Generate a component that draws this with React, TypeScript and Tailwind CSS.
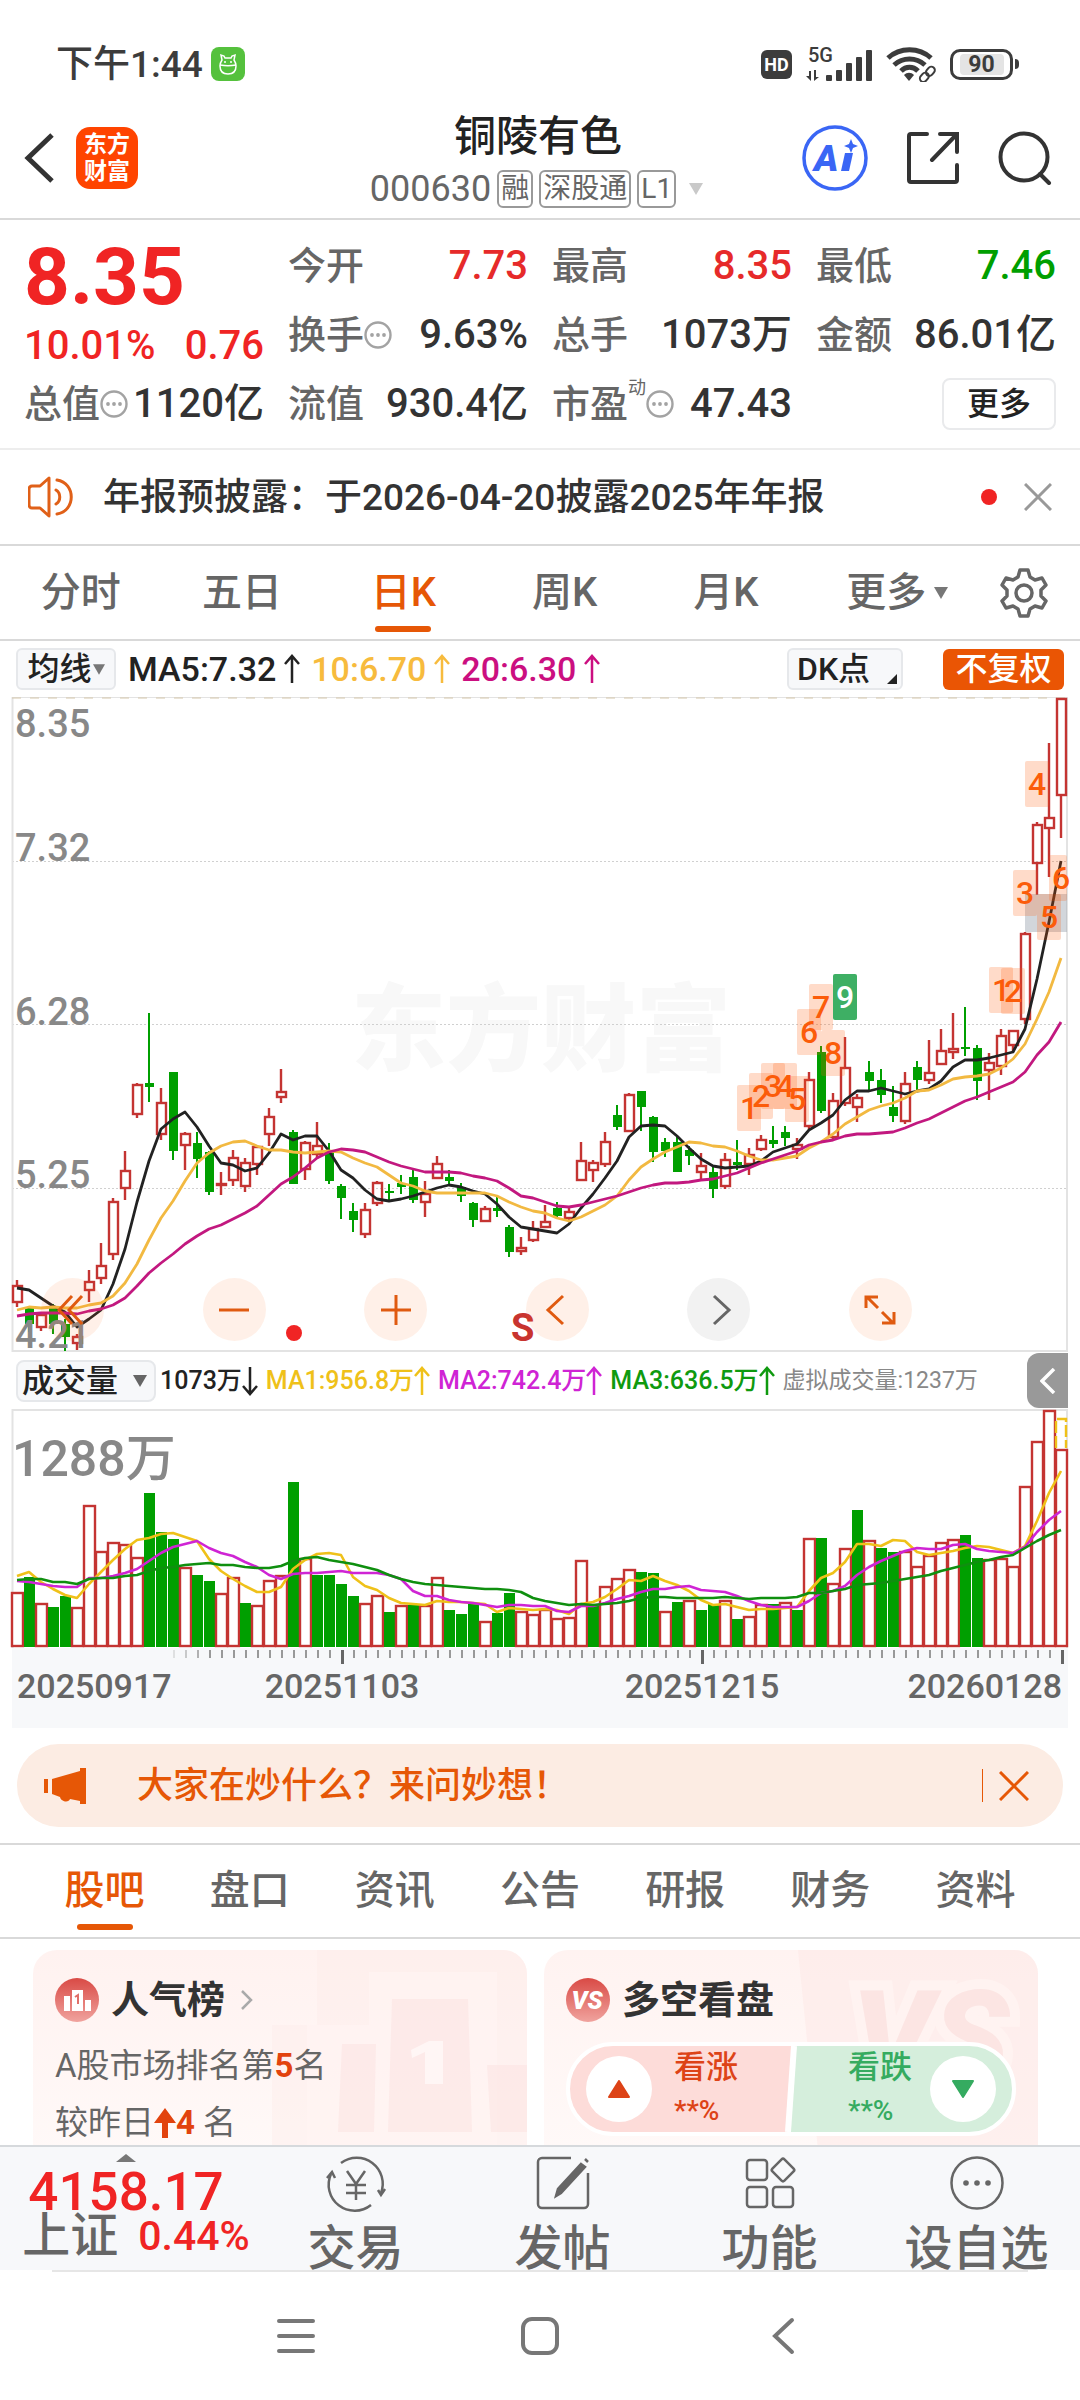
import { useState } from 'react'
import type { ReactNode } from 'react'

type Candle = ['u' | 'd', number, number, number, number]

const UP = '#c43432'
const DOWN = '#009f00'

// direction, high, body top, body bottom, low (chart units)
const candles: Candle[] = [
  ['u', 583, 588, 605, 610], ['d', 610, 611, 627, 635], ['u', 615, 617, 630, 634], ['d', 607, 611, 627, 637],
  ['d', 622, 627, 640, 654], ['u', 637, 639, 646, 653], ['u', 573, 584, 593, 605], ['u', 546, 568, 581, 587],
  ['u', 501, 504, 557, 563], ['u', 454, 473, 491, 503], ['u', 386, 387, 417, 421], ['d', 316, 386, 390, 405],
  ['u', 391, 405, 437, 443], ['d', 375, 375, 454, 463], ['u', 435, 436, 448, 473], ['d', 435, 446, 462, 481],
  ['d', 454, 455, 495, 498], ['u', 475, 486, 487, 498], ['u', 453, 460, 483, 489], ['u', 461, 465, 489, 495],
  ['u', 449, 449, 467, 478], ['u', 411, 419, 437, 449], ['u', 372, 394, 400, 406], ['d', 433, 435, 487, 487],
  ['u', 444, 445, 472, 483], ['u', 425, 448, 457, 462], ['d', 446, 454, 484, 487], ['d', 487, 489, 501, 522],
  ['d', 506, 514, 523, 535], ['u', 506, 512, 537, 541], ['u', 484, 485, 506, 509], ['d', 487, 494, 496, 503],
  ['d', 478, 486, 490, 497], ['d', 473, 480, 503, 506], ['u', 484, 496, 505, 520], ['u', 459, 466, 481, 482],
  ['d', 473, 480, 484, 489], ['d', 486, 490, 499, 505], ['d', 505, 506, 523, 530], ['u', 509, 511, 524, 525],
  ['d', 500, 511, 514, 520], ['d', 528, 530, 555, 560], ['u', 540, 550, 554, 558], ['u', 524, 531, 543, 545],
  ['u', 508, 524, 530, 531], ['d', 505, 511, 519, 522], ['u', 510, 514, 521, 524], ['u', 445, 463, 483, 484],
  ['u', 463, 465, 473, 485], ['u', 435, 444, 467, 470], ['d', 408, 418, 430, 433], ['u', 396, 397, 434, 435],
  ['d', 394, 394, 410, 434], ['d', 419, 420, 455, 465], ['d', 441, 445, 454, 460], ['d', 439, 445, 475, 475],
  ['d', 449, 453, 459, 468], ['u', 456, 468, 475, 483], ['d', 469, 475, 492, 501], ['u', 456, 462, 489, 492],
  ['d', 443, 465, 468, 473], ['u', 451, 457, 467, 478], ['u', 438, 442, 452, 454], ['d', 429, 443, 447, 451],
  ['d', 429, 435, 441, 449], ['u', 441, 447, 452, 462], ['u', 375, 382, 429, 432], ['d', 349, 355, 414, 416],
  ['u', 396, 403, 440, 442], ['u', 340, 370, 406, 409], ['u', 397, 400, 410, 425], ['d', 364, 375, 384, 394],
  ['d', 372, 383, 398, 406], ['d', 389, 410, 419, 425], ['u', 375, 386, 424, 427], ['d', 364, 370, 383, 395],
  ['u', 343, 375, 383, 387], ['u', 332, 353, 367, 368], ['u', 316, 351, 355, 362], ['d', 310, 350, 352, 359],
  ['d', 348, 351, 384, 403], ['u', 356, 365, 373, 403], ['u', 332, 338, 369, 378], ['u', 333, 333, 348, 355],
  ['u', 235, 236, 322, 327], ['u', 125, 127, 166, 198], ['u', 46, 120, 131, 180], ['u', 1, 1, 98, 141],
]

const ma5 = [
  591, 593, 601, 609, 615, 630, 622, 613, 587, 552, 505, 464, 432, 422, 415, 430, 449, 466, 468, 474, 471, 456,
  437, 443, 439, 439, 454, 473, 481, 493, 502, 504, 502, 499, 495, 491, 488, 490, 494, 497, 507, 520, 530, 532,
  534, 536, 527, 511, 497, 481, 464, 440, 429, 428, 429, 439, 451, 462, 469, 471, 470, 469, 464, 455, 451, 447,
  433, 426, 418, 403, 394, 394, 391, 394, 397, 394, 392, 384, 370, 363, 363, 361, 358, 355, 332, 282, 225, 164,
]

const ma10 = [
  613, 610, 611, 610, 611, 611, 608, 606, 599, 586, 567, 543, 521, 504, 484, 466, 456, 449, 445, 444, 449, 453,
  453, 455, 456, 455, 454, 455, 461, 466, 470, 478, 486, 489, 494, 496, 496, 496, 496, 496, 499, 505, 510, 514,
  516, 521, 524, 520, 514, 508, 499, 483, 470, 462, 455, 450, 445, 446, 449, 450, 454, 459, 463, 463, 461, 459,
  451, 445, 437, 427, 420, 413, 409, 406, 401, 394, 393, 388, 382, 380, 379, 377, 371, 362, 347, 322, 295, 261,
]

const ma20 = [
  619, 617, 616, 616, 616, 617, 614, 612, 608, 601, 589, 576, 566, 557, 547, 539, 532, 528, 522, 516, 509, 498,
  487, 480, 471, 461, 455, 452, 453, 455, 460, 465, 469, 472, 475, 475, 475, 476, 479, 481, 484, 491, 499, 501,
  505, 509, 510, 508, 505, 502, 499, 495, 491, 488, 486, 486, 485, 483, 482, 479, 476, 471, 466, 462, 458, 454,
  448, 445, 443, 439, 437, 437, 436, 435, 431, 426, 422, 416, 410, 404, 400, 395, 390, 385, 375, 358, 345, 325,
]

const volumes = [
  183, 168, 194, 198, 187, 198, 96, 142, 133, 135, 148, 84, 123, 130, 158, 166, 172, 184, 168, 194, 196, 171,
  166, 73, 149, 166, 166, 175, 187, 194, 186, 203, 196, 196, 196, 168, 201, 205, 195, 212, 204, 184, 202, 205,
  200, 209, 208, 151, 195, 177, 169, 160, 163, 164, 202, 193, 191, 201, 195, 191, 210, 207, 195, 195, 193, 201,
  129, 129, 174, 139, 101, 131, 139, 143, 142, 157, 146, 133, 130, 126, 149, 150, 149, 157, 77, 32, 1, 40,
]

// bars drawn in the falling colour
const volumeDown = new Set([1, 3, 4, 11, 12, 13, 15, 16, 19, 23, 25, 26, 27, 28, 31, 33, 36, 37, 38, 40, 41, 48, 52, 53, 55, 57, 58, 60, 63, 65, 67, 70, 72, 73, 79, 80])

const vma1 = [
  167, 163, 173, 180, 186, 189, 175, 163, 151, 140, 131, 129, 125, 124, 128, 132, 150, 162, 170, 177, 183, 183,
  178, 160, 151, 145, 144, 146, 168, 177, 181, 189, 194, 195, 196, 192, 193, 193, 194, 195, 203, 199, 200, 201,
  200, 201, 205, 195, 193, 188, 180, 171, 172, 167, 172, 176, 182, 191, 196, 195, 198, 201, 200, 200, 199, 198,
  182, 169, 164, 153, 135, 135, 137, 131, 132, 143, 146, 144, 142, 139, 137, 138, 141, 144, 137, 112, 84, 62,
]

const vma2 = [
  172, 173, 175, 177, 178, 178, 169, 169, 167, 164, 160, 152, 144, 138, 135, 132, 139, 144, 147, 153, 158, 166,
  170, 165, 164, 164, 163, 162, 164, 164, 164, 166, 170, 182, 187, 187, 191, 193, 194, 196, 198, 196, 196, 197,
  197, 202, 203, 197, 197, 194, 190, 187, 183, 180, 180, 178, 177, 181, 182, 183, 187, 192, 196, 198, 198, 198,
  192, 184, 182, 177, 166, 158, 152, 147, 142, 139, 140, 140, 136, 135, 140, 142, 143, 144, 138, 123, 111, 102,
]

const vma3 = [
  171, 170, 170, 173, 173, 175, 170, 169, 169, 167, 166, 162, 159, 158, 156, 155, 154, 156, 156, 158, 159, 159,
  157, 152, 149, 148, 151, 153, 155, 158, 161, 166, 170, 173, 175, 176, 177, 178, 179, 180, 180, 181, 183, 189,
  192, 194, 196, 195, 196, 195, 194, 192, 189, 188, 188, 189, 189, 189, 189, 188, 189, 190, 189, 189, 189, 188,
  184, 184, 182, 180, 176, 175, 174, 172, 170, 168, 166, 162, 159, 156, 153, 151, 148, 146, 139, 132, 126, 121,
]

// candle index, top, digit
const marks: [number, number, string][] = [
  [61, 388, '1'], [62, 376, '2'], [63, 366, '3'], [64, 366, '4'], [65, 379, '5'], [66, 312, '6'], [67, 287, '7'],
  [68, 333, '8'], [69, 277, '9'], [82, 270, '1'], [83, 271, '2'], [84, 173, '3'], [85, 64, '4'], [86, 197, '5'],
  [87, 158, '6'],
]

const cx = (i: number) => 17 + i * 12
const line = (values: number[]) => values.map((v, i) => `${cx(i)},${v}`).join(' ')

function Arrow({ down = false }: { down?: boolean }) {
  return (
    <svg viewBox="0 0 16 30" className="h-[30px] w-4 shrink-0" fill="none" stroke="currentColor" strokeWidth="2.5">
      {down ? <path d="M8 1v27M1 20l7 8 7-8" /> : <path d="M8 29V2M1 10l7-8 7 8" />}
    </svg>
  )
}

function Caret({ className }: { className: string }) {
  return (
    <svg viewBox="0 0 14 12" className={className} fill="currentColor">
      <path d="M0 0h14L7 12z" />
    </svg>
  )
}

function InfoDots() {
  return (
    <svg viewBox="0 0 28 28" className="h-7 w-7 shrink-0" fill="none" stroke="#a3a3a3" strokeWidth="2.4">
      <circle cx="14" cy="14" r="12.5" />
      <g fill="#a3a3a3" stroke="none">
        <circle cx="8" cy="14" r="1.9" />
        <circle cx="14" cy="14" r="1.9" />
        <circle cx="20" cy="14" r="1.9" />
      </g>
    </svg>
  )
}

function StatusBar() {
  return (
    <div className="flex h-[104px] items-center justify-between pr-[61px] pl-[56px] pt-6 text-[#3c3c3c]">
      <div className="flex items-center gap-2">
        <span className="text-[37px] leading-none font-medium">下午1:44</span>
        <svg viewBox="0 0 34 34" className="h-[34px] w-[34px]">
          <rect width="34" height="34" rx="8" fill="#55c13d" />
          <g fill="none" stroke="#fff" strokeWidth="1.5">
            <path d="M11 13l-1-5 3 1 1 2h6l1-2 3-1-1 5c2 3 2 5 2 6 0 5-3 8-8 8s-8-3-8-8c0-1 0-3 2-6z" />
            <path d="M9 18c5 1 11 1 16 0" />
          </g>
          <circle cx="14" cy="15" r="1" fill="#fff" />
          <circle cx="20" cy="15" r="1" fill="#fff" />
        </svg>
      </div>
      <div className="flex items-center gap-[14px]">
        <span className="flex h-[29px] w-[31px] items-center justify-center rounded-md bg-[#3c3c3c] text-[18px] font-bold text-white">HD</span>
        <svg viewBox="0 0 66 36" className="h-9 w-[66px]" fill="#3c3c3c">
          <text x="2" y="16" fontSize="20" fontWeight="500">5G</text>
          <path d="M3 25h2v10l-5-5h3zM8 34V24h2v7h3l-5 4z" />
          <rect x="20" y="29" width="6" height="6" rx="1" />
          <rect x="30" y="24" width="6" height="11" rx="1" />
          <rect x="40" y="17" width="6" height="18" rx="1" />
          <rect x="50" y="11" width="6" height="24" rx="1" />
          <rect x="60" y="4" width="6" height="31" rx="1" />
        </svg>
        <svg viewBox="0 0 50 36" className="h-9 w-[50px]" fill="none" stroke="#3c3c3c" strokeWidth="5">
          <path d="M2 12c12-11 31-11 43 0M8 19c9-8 22-8 31 0M15 25c5-5 12-5 17 0" />
          <path d="M18 29c3-3 7-3 10 0l-5 6z" fill="#3c3c3c" stroke="none" />
          <g stroke="#fff" strokeWidth="6">
            <path d="M36 31l10-10" />
          </g>
          <g strokeWidth="2">
            <rect x="35" y="26" width="7" height="10" rx="3.5" transform="rotate(40 38 31)" />
            <rect x="41" y="20" width="7" height="10" rx="3.5" transform="rotate(40 44 25)" />
          </g>
        </svg>
        <div className="flex items-center gap-[2px]">
          <span className="flex h-[31px] w-[63px] items-center justify-center rounded-[10px] border-[3px] border-[#3c3c3c] p-[2px]">
            <span className="flex h-full w-[44px] items-center justify-center rounded bg-[#e4e4e4] text-[23px] leading-none font-bold">90</span>
          </span>
          <span className="h-[10px] w-[4px] rounded-r bg-[#3c3c3c]" />
        </div>
      </div>
    </div>
  )
}

function Tag({ children }: { children: ReactNode }) {
  return <span className="rounded-md border-2 border-[#999] px-[2px] text-[28px] leading-[34px]">{children}</span>
}

function Header() {
  return (
    <header className="grid h-[116px] grid-cols-[1fr_auto_1fr] items-center border-b-2 border-[#d9d9d9] pr-7 pl-6">
      <div className="mb-[6px] flex items-center gap-[22px]">
        <button aria-label="返回">
          <svg viewBox="0 0 30 50" className="h-[50px] w-[30px]" fill="none" stroke="#333" strokeWidth="5">
            <path d="M28 2L4 25l24 23" />
          </svg>
        </button>
        <a href="#home" className="flex h-[62px] w-[62px] flex-col items-center justify-center rounded-[14px] bg-[#ff4400] text-[23px] leading-[27px] font-bold text-white">
          <span>东方</span>
          <span>财富</span>
        </a>
      </div>
      <div className="flex flex-col items-center gap-[10px]">
        <h1 className="text-[42px] leading-[46px] font-medium text-[#222]">铜陵有色</h1>
        <div className="flex items-center gap-[6px] text-[#666]">
          <span className="text-[36px] leading-[38px]">000630</span>
          <Tag>融</Tag>
          <Tag>深股通</Tag>
          <Tag>L1</Tag>
          <Caret className="ml-1 h-3 w-5 text-[#c9c9c9]" />
        </div>
      </div>
      <div className="mb-[6px] flex items-center justify-end gap-[39px]">
        <button aria-label="AI">
          <svg viewBox="0 0 66 66" className="h-[66px] w-[66px]">
            <circle cx="33" cy="33" r="31" fill="none" stroke="#3a66f5" strokeWidth="3.5" />
            <text x="12" y="46" fontSize="37" fontWeight="900" fontStyle="italic" fill="#3a66f5">A</text>
            <path d="M43 28h8l-4 18h-8z" fill="#3a66f5" />
            <path d="M49 14l2 5 5 2-5 2-2 5-2-5-5-2 5-2z" fill="#3a66f5" />
          </svg>
        </button>
        <button aria-label="分享">
          <svg viewBox="0 0 52 54" className="h-[54px] w-[52px]" fill="none" stroke="#333" strokeWidth="4" strokeLinecap="round">
            <path d="M20 3H4a2 2 0 0 0-2 2v44a2 2 0 0 0 2 2h44a2 2 0 0 0 2-2V34" />
            <path d="M33 3h17v18M50 3L25 29" />
          </svg>
        </button>
        <button aria-label="搜索">
          <svg viewBox="0 0 54 54" className="h-[54px] w-[54px]" fill="none" stroke="#333" strokeWidth="4" strokeLinecap="round">
            <circle cx="26" cy="26" r="23.5" />
            <path d="M42 43l9 9" />
          </svg>
        </button>
      </div>
    </header>
  )
}

function Stat({ label, value, color = 'text-[#333]', info = false, sup }: { label: string; value: string; color?: string; info?: boolean; sup?: string }) {
  return (
    <div className="flex items-center justify-between whitespace-nowrap">
      <span className="flex items-center text-[38px] leading-[48px] font-medium text-[#666]">
        {label}
        {sup && <sup className="-top-4 text-[18px] leading-none font-normal">{sup}</sup>}
        {info && <InfoDots />}
      </span>
      <span className={`text-[40px] leading-[48px] font-medium ${color}`}>{value}</span>
    </div>
  )
}

function Quote() {
  return (
    <section className="border-b-2 border-[#ededed] px-6 pt-[11px] pb-[10px]">
      <div className="grid auto-rows-[69px] grid-cols-4 gap-x-6">
        <div className="row-span-2 pt-2 text-[#f02424]">
          <p className="text-[80px] leading-[76px] font-bold">8.35</p>
          <p className="flex justify-between text-[40px] leading-[62px] font-medium">
            <span>10.01%</span>
            <span>0.76</span>
          </p>
        </div>
        <Stat label="今开" value="7.73" color="text-[#e62a2a]" />
        <Stat label="最高" value="8.35" color="text-[#e62a2a]" />
        <Stat label="最低" value="7.46" color="text-[#009f00]" />
        <Stat label="换手" value="9.63%" info />
        <Stat label="总手" value="1073万" />
        <Stat label="金额" value="86.01亿" />
        <Stat label="总值" value="1120亿" info />
        <Stat label="流值" value="930.4亿" />
        <Stat label="市盈" value="47.43" sup="动" info />
        <div className="flex items-center justify-end">
          <button className="h-[52px] w-[114px] rounded-lg border-2 border-[#e9eaec] text-[32px] leading-none font-medium text-[#222]">更多</button>
        </div>
      </div>
    </section>
  )
}

function Notice() {
  return (
    <div className="flex h-24 items-center border-b-2 border-[#d9d9d9] px-7">
      <svg viewBox="0 0 46 42" className="h-[42px] w-[46px]" fill="none" stroke="#e06018" strokeWidth="3" strokeLinecap="round" strokeLinejoin="round">
        <path d="M21 2v38l-9-8H4a3 3 0 0 1-3-3V13a3 3 0 0 1 3-3h8z" />
        <path d="M28 14c5 3 5 11 0 14M29 4c19 3 19 31 0 34" />
      </svg>
      <p className="ml-[29px] flex-1 text-[37px] leading-none font-medium text-[#333]">年报预披露：于2026-04-20披露2025年年报</p>
      <span className="mr-[27px] h-4 w-4 rounded-full bg-[#f02424]" />
      <button aria-label="关闭">
        <svg viewBox="0 0 28 28" className="h-7 w-7" fill="none" stroke="#999" strokeWidth="3">
          <path d="M1 1l26 26M27 1L1 27" />
        </svg>
      </button>
    </div>
  )
}

function Tab({ label, active, onClick, caret = false }: { label: string; active: boolean; onClick: () => void; caret?: boolean }) {
  return (
    <button
      onClick={onClick}
      className={`relative flex h-full flex-1 items-center justify-center text-[40px] font-medium ${active ? 'text-[#e65706]' : 'text-[#666]'}`}
    >
      {caret ? <span className="pl-5">{label}</span> : label}
      {caret && <Caret className="ml-2 h-3 w-[14px] text-[#777]" />}
      {active && <span className="absolute bottom-[7px] left-1/2 h-[6px] w-14 -translate-x-1/2 rounded-full bg-[#e65706]" />}
    </button>
  )
}

function PeriodTabs() {
  const [active, setActive] = useState('日K')
  return (
    <nav className="flex h-[95px] items-center border-b-2 border-[#d9d9d9]">
      {['分时', '五日', '日K', '周K', '月K', '更多'].map((t) => (
        <Tab key={t} label={t} active={t === active} onClick={() => setActive(t)} caret={t === '更多'} />
      ))}
      <button aria-label="设置" className="flex w-28 justify-center">
        <svg viewBox="0 0 48 50" className="h-[50px] w-12" fill="none" stroke="#666" strokeWidth="3.5" strokeLinejoin="round">
          <path d="M20 2h8l2 7 5 3 7-2 4 7-5 5v6l5 5-4 7-7-2-5 3-2 7h-8l-2-7-5-3-7 2-4-7 5-5v-6l-5-5 4-7 7 2 5-3z" />
          <circle cx="24" cy="25" r="8" />
        </svg>
      </button>
    </nav>
  )
}

function MaRow() {
  return (
    <div className="flex h-14 items-center px-4 text-[34px] leading-none font-medium whitespace-nowrap">
      <button className="flex h-[42px] w-[100px] items-center justify-center gap-px rounded-md border-2 border-[#e6e8eb] bg-[#f7f8fa] text-[32px] font-medium text-[#222]">
        均线
        <Caret className="h-[11px] w-3 text-[#777]" />
      </button>
      <span className="ml-3 flex items-center gap-2 text-[#222]">MA5:7.32<Arrow /></span>
      <span className="ml-[11px] flex items-center gap-2 text-[#f7bb3d]">10:6.70<Arrow /></span>
      <span className="ml-[11px] flex items-center gap-2 text-[#cb0f80]">20:6.30<Arrow /></span>
      <button className="ml-auto flex h-[42px] w-[116px] items-center justify-between rounded-md border-2 border-[#e6e8eb] bg-[#f7f8fa] pr-1 pl-2 text-[32px] font-medium text-[#222]">
        DK点
        <svg viewBox="0 0 10 10" className="mt-5 h-[10px] w-[10px]"><path d="M10 0v10H0z" fill="#222" /></svg>
      </button>
      <button className="ml-10 h-[41px] w-[121px] rounded-md bg-[#ea5504] text-[32px] font-medium text-white">不复权</button>
    </div>
  )
}

function RoundButton({ label, muted = false, children }: { label: string; muted?: boolean; children: ReactNode }) {
  return (
    <button
      aria-label={label}
      className={`flex h-[63px] w-[63px] items-center justify-center rounded-full ${muted ? 'bg-[#f2f2f2] text-[#666]' : 'bg-[#ff6a1a]/10 text-[#e05a10]'}`}
    >
      <svg viewBox="0 0 32 32" className="h-8 w-8" fill="none" stroke="currentColor" strokeWidth="3">{children}</svg>
    </button>
  )
}

function PriceChart() {
  return (
    <div className="relative">
      <svg viewBox="0 0 1080 655" className="block w-full">
        <text x="351" y="367" fontSize="95" fontWeight="900" fill="#f8f8f8">东方财富</text>
        <g stroke="#d0d0d0" strokeDasharray="2 2">
          <path d="M12 164.5H1067M12 327.5H1067M12 491.5H1067" />
        </g>
        <g fill="none" stroke="#e3e3e3" strokeWidth="2">
          <path d="M12.5 0V654H1067V0z" />
        </g>
        <path d="M12 1H1067" stroke="#d5c7ab" strokeDasharray="9 9" />

        {candles.map(([dir, high, top, bottom, low], i) => {
          const x = cx(i)
          return dir === 'u' ? (
            <g key={i} fill="none" stroke={UP} strokeWidth="2.4">
              <path d={`M${x} ${high}V${top}M${x} ${bottom}V${low}`} />
              <rect x={x - 4} y={top + 1} width="9" height={Math.max(bottom - top - 1, 1)} />
            </g>
          ) : (
            <g key={i} fill={DOWN}>
              <rect x={x - 1} y={high} width="2" height={low - high} />
              <rect x={x - 4} y={top} width="9" height={bottom - top} />
            </g>
          )
        })}

        <rect x="1025" y="197" width="42" height="38" fill="#9ca3af" opacity=".45" />

        <g fill="none" strokeWidth="2.8" strokeLinejoin="round">
          <polyline points={line(ma5)} stroke="#222" />
          <polyline points={line(ma10)} stroke="#f2b941" />
          <polyline points={line(ma20)} stroke="#c2187f" />
        </g>

        {marks.map(([i, top, digit]) => (
          <g key={i}>
            <rect x={cx(i) - 12} y={top} width={i === 87 ? 18 : 24} height="46" rx="2" fill={digit === '9' ? '#3eaf64' : '#ff5a0a'} opacity={digit === '9' ? 1 : 0.22} />
            <text x={cx(i)} y={top + 34} fontSize="32" fontWeight="500" textAnchor="middle" fill={digit === '9' ? '#fff' : '#fb5c0a'}>
              {digit}
            </text>
          </g>
        ))}

        <circle cx="294" cy="636" r="8" fill="#f02424" />
        <text x="511" y="644" fontSize="38" fontWeight="700" fill="#c8342f">S</text>
        <g fontSize="38" fontWeight="500" fill="#888">
          <text x="15" y="40">8.35</text>
          <text x="15" y="164">7.32</text>
          <text x="15" y="328">6.28</text>
          <text x="15" y="491">5.25</text>
          <text x="15" y="651">4.21</text>
        </g>
      </svg>
      <div className="absolute right-[168px] bottom-[11px] left-[41px] flex justify-between">
        <RoundButton label="最早"><path d="M15 2L2 16l13 14M25 2L12 16l13 14" /></RoundButton>
        <RoundButton label="缩小"><path d="M1 16h30" /></RoundButton>
        <RoundButton label="放大"><path d="M1 16h30M16 1v30" /></RoundButton>
        <RoundButton label="左移"><path d="M22 2L7 16l15 14" /></RoundButton>
        <RoundButton label="右移" muted><path d="M11 2l15 14-15 14" /></RoundButton>
        <RoundButton label="全屏"><path d="M2 14V3h12M3 3l11 11M30 18v11H18M29 29L18 18" /></RoundButton>
      </div>
    </div>
  )
}

function VolumeRow() {
  return (
    <div className="flex h-[57px] items-center pl-4 text-[25px] leading-none font-medium whitespace-nowrap">
      <button className="flex h-[42px] w-[140px] items-center justify-between rounded-lg border-2 border-[#e6e8eb] bg-[#f7f8fa] pr-[7px] pl-1 text-[32px] font-medium text-[#222]">
        成交量
        <Caret className="h-3 w-[14px] text-[#666]" />
      </button>
      <span className="ml-1 flex items-center text-[#222]">1073万<Arrow down /></span>
      <span className="ml-2 flex items-center text-[#efc119]">MA1:956.8万<Arrow /></span>
      <span className="ml-2 flex items-center text-[#cf24d4]">MA2:742.4万<Arrow /></span>
      <span className="ml-2 flex items-center text-[#0f9a0f]">MA3:636.5万<Arrow /></span>
      <span className="ml-2 text-[23px] font-normal text-[#888]">虚拟成交量:1237万</span>
      <button aria-label="展开" className="mr-3 ml-auto flex h-[55px] w-[41px] items-center justify-center rounded-l-xl bg-[#999]">
        <svg viewBox="0 0 16 26" className="h-[26px] w-4" fill="none" stroke="#fff" strokeWidth="3.5"><path d="M14 1L2 13l12 12" /></svg>
      </button>
    </div>
  )
}

function VolumeChart() {
  return (
    <svg viewBox="0 0 1080 319" className="block w-full">
      <rect x="12" y="239" width="1056" height="80" fill="#f7f8fa" />
      <path d="M12.5 239V1H1067V239" fill="none" stroke="#e3e3e3" strokeWidth="2" />
      {volumes.map((top, i) =>
        volumeDown.has(i) ? (
          <rect key={i} x={cx(i) - 5} y={top} width="11" height={238 - top} fill={DOWN} />
        ) : (
          <rect key={i} x={cx(i) - 5} y={top + 1} width="11" height={236 - top} fill="#fff" stroke={UP} strokeWidth="2.4" />
        ),
      )}
      <path d="M1056 39V10H1066V39" fill="none" stroke="#efc119" strokeWidth="2.4" strokeDasharray="12 3" />
      <g fill="none" strokeWidth="2.6" strokeLinejoin="round">
        <polyline points={line(vma1)} stroke="#efc119" />
        <polyline points={line(vma2)} stroke="#cf24d4" />
        <polyline points={line(vma3)} stroke="#0f8f0f" />
      </g>
      <text x="12" y="67" fontSize="50" fontWeight="500" fill="#888">1288万</text>
      {volumes.map((_, i) => {
        if (i < 13) return null
        const major = i % 30 === 27
        return (
          <rect key={i} x={cx(i)} y="241" width={major ? 3 : 2} height={major ? 14 : 8} fill={major ? '#666' : '#999'} opacity={i < 16 ? (i - 12) / 4 : 1} />
        )
      })}
      <g fontSize="34" fontWeight="500" fill="#666">
        <text x="17" y="289">20250917</text>
        <text x="342" y="289" textAnchor="middle">20251103</text>
        <text x="702" y="289" textAnchor="middle">20251215</text>
        <text x="1062" y="289" textAnchor="end">20260128</text>
      </g>
    </svg>
  )
}

function AskBanner() {
  return (
    <div className="mx-[17px] my-4 flex h-[83px] items-center rounded-full bg-[#fcece3] pr-[34px] pl-[27px] text-[#e65706]">
      <svg viewBox="0 0 42 36" className="h-9 w-[42px]" fill="currentColor">
        <path d="M0 11h4v14H0zM8 11L36 3V0h6v36h-6v-3l-10-2c-1 4-9 3-10-2l-8-3z" />
      </svg>
      <a href="#ask" className="ml-[51px] flex-1 text-[36px] leading-none font-medium">大家在炒什么？来问妙想！</a>
      <span className="mr-4 h-[33px] w-px bg-[#e65706]" />
      <button aria-label="关闭">
        <svg viewBox="0 0 30 30" className="h-[30px] w-[30px]" fill="none" stroke="currentColor" strokeWidth="3"><path d="M1 1l28 28M29 1L1 29" /></svg>
      </button>
    </div>
  )
}

function SectionTabs() {
  const [active, setActive] = useState('股吧')
  return (
    <nav className="flex h-24 items-center border-y-2 border-[#d9d9d9] px-8">
      {['股吧', '盘口', '资讯', '公告', '研报', '财务', '资料'].map((t) => (
        <Tab key={t} label={t} active={t === active} onClick={() => setActive(t)} />
      ))}
    </nav>
  )
}

function BadgeIcon({ children }: { children: ReactNode }) {
  return (
    <svg viewBox="0 0 44 44" className="h-11 w-11">
      <defs>
        <linearGradient id="badge" x2="0" y2="1">
          <stop stopColor="#d94a45" />
          <stop offset="1" stopColor="#f0a39e" />
        </linearGradient>
      </defs>
      <circle cx="22" cy="22" r="22" fill="url(#badge)" />
      {children}
    </svg>
  )
}

function Cards() {
  return (
    <section className="grid min-h-0 flex-1 grid-cols-2 gap-[17px] overflow-hidden pt-[11px] pr-[42px] pl-[33px]">
      <div className="relative h-[230px] overflow-hidden rounded-3xl bg-linear-to-b from-[#fff2f0] to-[#fffaf9] px-[22px] pt-7">
        <svg viewBox="0 0 260 200" className="absolute top-0 right-0 h-[200px] w-[260px]">
          <path d="M50 0H260V200H5V75H50z" fill="#fdeae8" opacity=".4" />
          <path d="M102 22H230V200H40V75H102z" fill="#fff5f3" opacity=".6" />
          <path d="M125 49h76l4 133h-84zM75 94h34l-2 88H71zM220 115h40v67h-36z" fill="#fce4e2" opacity=".6" />
          <path d="M144 100l18-9h14v43h-18v-32l-13 6z" fill="#fff6f5" />
        </svg>
        <div className="relative flex items-center gap-3">
          <BadgeIcon>
            <path d="M17 12h11v21H17zM9 18h6v15H9zM30 22h6v11h-6z" fill="#fff" />
            <path d="M20 19l3-2v9" stroke="#e0706a" strokeWidth="2" fill="none" />
          </BadgeIcon>
          <h2 className="text-[38px] leading-none font-bold text-[#333]">人气榜</h2>
          <svg viewBox="0 0 12 20" className="ml-1 h-5 w-3" fill="none" stroke="#aaa" strokeWidth="2.5"><path d="M1 1l9 9-9 9" /></svg>
        </div>
        <p className="relative mt-5 text-[33px] leading-[48px] text-[#666]">
          A股市场排名第<b className="text-[#e2430e]">5</b>名
        </p>
        <p className="relative mt-[9px] flex items-center text-[33px] leading-[48px] text-[#666]">
          较昨日
          <svg viewBox="0 0 22 30" className="h-[30px] w-[22px]" fill="#e2430e"><path d="M11 0l11 15h-8v15H8V15H0z" /></svg>
          <b className="mr-2 text-[#e2430e]">4</b>名
        </p>
      </div>

      <div className="relative h-[230px] overflow-hidden rounded-3xl bg-linear-to-b from-[#fff3f1] to-[#fffaf9] px-[22px] pt-7">
        <svg viewBox="0 0 240 200" className="absolute top-0 right-0 h-[200px] w-[240px]">
          <path d="M0 0H240V200H20z" fill="#fdeae8" opacity=".6" />
          <text x="54" y="130" fontSize="126" fontWeight="900" fontStyle="italic" fill="#fce5e3" stroke="#fff3f1" strokeWidth="20" paintOrder="stroke">VS</text>
        </svg>
        <div className="relative flex items-center gap-3">
          <BadgeIcon>
            <text x="21" y="31" fontSize="25" fontWeight="900" fontStyle="italic" textAnchor="middle" fill="#fff">VS</text>
          </BadgeIcon>
          <h2 className="text-[38px] leading-none font-bold text-[#333]">多空看盘</h2>
        </div>
        <div className="relative mt-5 flex h-[94px] overflow-hidden rounded-full border-4 border-white bg-linear-[92deg] from-[#fddcd9] from-50% to-[#d5eedc] to-50%">
          <svg viewBox="0 0 12 86" className="absolute top-0 left-1/2 h-[86px] w-3 -translate-x-1/2"><path d="M9 0L3 86" stroke="#fff" strokeWidth="6" /></svg>
          <button className="flex flex-1 items-center gap-[22px] pl-4 text-left text-[#dd4317]">
            <span className="flex h-[66px] w-[66px] items-center justify-center rounded-full bg-white">
              <svg viewBox="0 0 22 18" className="h-[18px] w-[22px]" fill="currentColor" stroke="currentColor" strokeWidth="2" strokeLinejoin="round"><path d="M11 1l10 16H1z" /></svg>
            </span>
            <span className="text-[32px] leading-[42px] font-medium">看涨<br /><span className="text-[28px]">**%</span></span>
          </button>
          <button className="flex flex-1 items-center justify-end gap-[18px] pr-4 text-left text-[#35ab60]">
            <span className="text-[32px] leading-[42px] font-medium">看跌<br /><span className="text-[28px]">**%</span></span>
            <span className="flex h-[66px] w-[66px] items-center justify-center rounded-full bg-white">
              <svg viewBox="0 0 22 18" className="h-[18px] w-[22px]" fill="currentColor" stroke="currentColor" strokeWidth="2" strokeLinejoin="round"><path d="M11 17L1 1h20z" /></svg>
            </span>
          </button>
        </div>
      </div>
    </section>
  )
}

function Action({ label, children }: { label: string; children: ReactNode }) {
  return (
    <button className="flex flex-1 flex-col items-center pt-2 text-[48px] leading-[64px] font-medium text-[#666]">
      <svg viewBox="0 0 56 56" className="h-14 w-14 shrink-0 overflow-visible" fill="none" stroke="currentColor" strokeWidth="2.5">{children}</svg>
      <span className="mt-[6px]">{label}</span>
    </button>
  )
}

function BottomBar() {
  return (
    <footer className="flex h-[125px] overflow-hidden border-t-2 border-[#d6d9dc] bg-[#f7f8fa]">
      <a href="#index" className="flex w-[252px] flex-col items-center pt-[7px] whitespace-nowrap">
        <svg viewBox="0 0 20 8" className="h-2 w-5"><path d="M10 0l10 8H0z" fill="#777" /></svg>
        <span className="text-[53px] leading-[60px] font-medium text-[#f02424]">4158.17</span>
        <span className="flex items-center gap-5 pl-5 text-[48px] leading-[28px] font-medium text-[#666]">
          上证
          <span className="text-[41px] text-[#f02424]">0.44%</span>
        </span>
      </a>
      <Action label="交易">
        <path d="M13 8a26 26 0 0 1 40 30M43 50A26 26 0 0 1 3 19" />
        <path d="M57 34l-4 6-3-5M-1 23l5-6 3 6M19 16l9 13 9-13M28 29v16M18 30h20M18 38h20" />
      </Action>
      <Action label="发帖">
        <path d="M36 3H7a4 4 0 0 0-4 4v42a4 4 0 0 0 4 4h42a4 4 0 0 0 4-4V18" />
        <path d="M46 9l4 3-24 26-5 3 2-7zM50 4l3 3" fill="currentColor" />
      </Action>
      <Action label="功能">
        <rect x="5" y="5" width="20" height="20" rx="3" />
        <rect x="5" y="32" width="20" height="20" rx="3" />
        <rect x="31" y="32" width="20" height="20" rx="3" />
        <rect x="32.5" y="6.5" width="17" height="17" rx="2" transform="rotate(45 41 15)" />
      </Action>
      <Action label="设自选">
        <circle cx="28" cy="28" r="25.5" />
        <g fill="currentColor" stroke="none">
          <circle cx="17" cy="28" r="2.8" />
          <circle cx="28" cy="28" r="2.8" />
          <circle cx="39" cy="28" r="2.8" />
        </g>
      </Action>
    </footer>
  )
}

function SystemNav() {
  return (
    <nav className="mx-[52px] flex h-[130px] items-center justify-center gap-[204px] border-t-2 border-[#e6e6e6]">
      <button aria-label="最近任务">
        <svg viewBox="0 0 40 40" className="h-10 w-10" stroke="#777" strokeWidth="4" strokeLinecap="round"><path d="M3 5h34M3 20h34M3 35h34" /></svg>
      </button>
      <button aria-label="主屏幕">
        <svg viewBox="0 0 40 40" className="h-10 w-10" fill="none" stroke="#777" strokeWidth="4"><rect x="3" y="3" width="34" height="34" rx="9" /></svg>
      </button>
      <button aria-label="后退">
        <svg viewBox="0 0 40 40" className="h-10 w-10" fill="none" stroke="#777" strokeWidth="4" strokeLinecap="round"><path d="M28 4L11 20l17 16" /></svg>
      </button>
    </nav>
  )
}

export default function App() {
  return (
    <div className="flex h-screen flex-col overflow-hidden bg-white font-[Roboto,'Noto_Sans_CJK_SC',sans-serif] text-[#333] [&>*:not(section)]:shrink-0">
      <StatusBar />
      <Header />
      <div>
        <Quote />
      </div>
      <Notice />
      <PeriodTabs />
      <MaRow />
      <PriceChart />
      <VolumeRow />
      <VolumeChart />
      <AskBanner />
      <SectionTabs />
      <Cards />
      <BottomBar />
      <SystemNav />
    </div>
  )
}
